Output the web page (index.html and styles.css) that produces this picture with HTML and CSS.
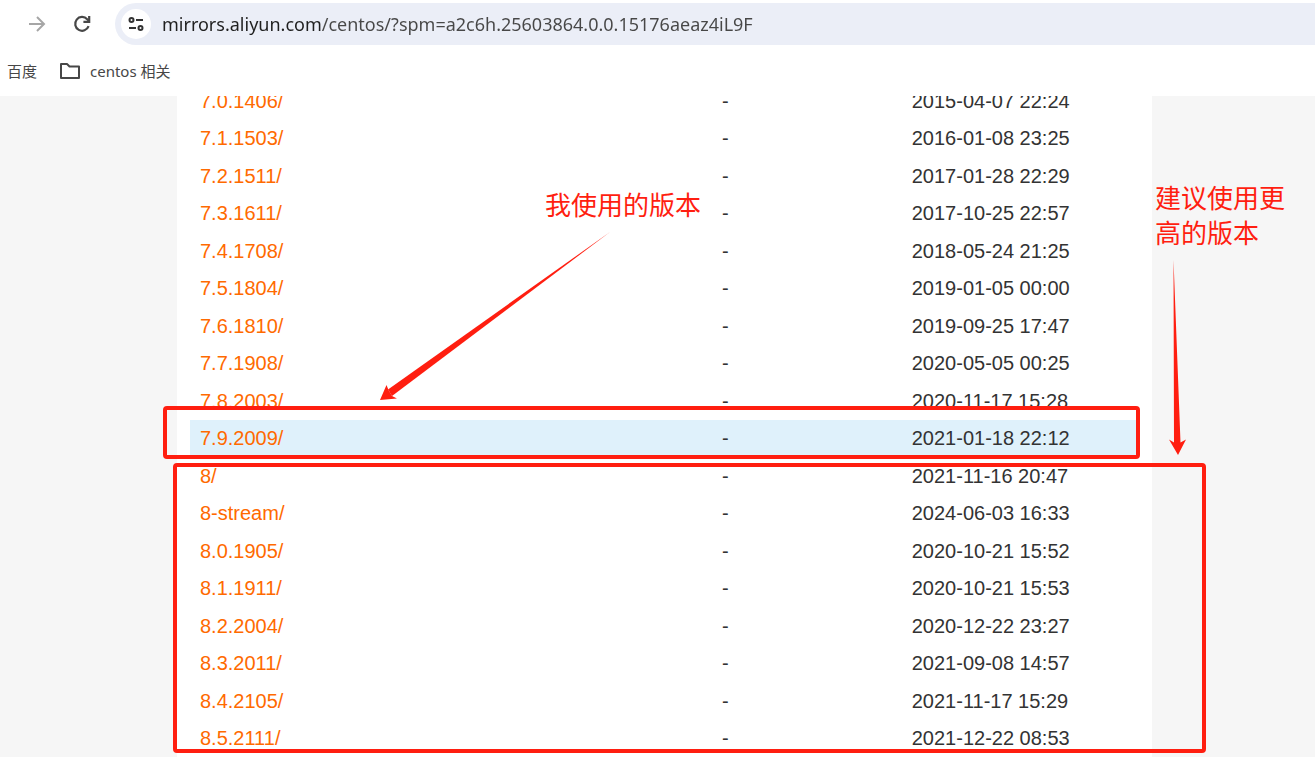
FILE: index.html
```html
<!DOCTYPE html>
<html lang="zh-CN">
<head>
    <meta charset="UTF-8">
    <meta name="viewport" content="width=device-width, initial-scale=1.0">
    <title>centos 镜像</title>
    <link rel="stylesheet" href="styles.css">
</head>
<body>

    <header class="browser">
        <div class="toolbar">
            <button class="nav-btn" type="button" aria-label="前进">
                <svg width="20" height="20" viewBox="0 0 20 20" fill="none" stroke="#a6a6a6" stroke-width="2">
                    <path d="M2 10H16.500M10 3L17 10L10 17"/>
                </svg>
            </button>
            <button class="nav-btn" type="button" aria-label="刷新">
                <svg width="20" height="20" viewBox="0 0 20 20" fill="none" stroke="#474747" stroke-width="2.200">
                    <path d="M16.600 12.200A6.900 6.900 0 1 1 15.200 5.200L17 7"/>
                    <path d="M17.200 2V7.800H11.400"/>
                </svg>
            </button>
            <div class="address-bar">
                <button class="site-info" type="button" aria-label="网站信息">
                    <svg width="18" height="18" viewBox="0 0 18 18" fill="none" stroke="#333" stroke-width="2">
                        <circle cx="4.500" cy="5" r="2"/>
                        <path d="M9 5H16M2 13H9"/>
                        <circle cx="13.500" cy="13" r="2"/>
                    </svg>
                </button>
                <input class="url" type="text" aria-label="地址" spellcheck="false" value="mirrors.aliyun.com/centos/?spm=a2c6h.25603864.0.0.15176aeaz4iL9F">
            </div>
        </div>
        <nav class="bookmarks">
            <a href="#">百度</a>
            <a href="#">
                <svg width="22" height="18" viewBox="0 0 22 18" fill="none" stroke="#474747" stroke-width="2" stroke-linejoin="round">
                    <path d="M2 2H8L10.500 4.500H20V16H2Z"/>
                </svg>
                <span>centos 相关</span>
            </a>
        </nav>
    </header>

    <main class="page">
        <div class="panel">
            <table class="file-list">
                <colgroup>
                    <col class="col-name">
                    <col class="col-size">
                    <col class="col-date">
                </colgroup>
                <tbody>
                    <tr><td><a href="#">7.0.1406/</a></td><td>-</td><td>2015-04-07 22:24</td></tr>
                    <tr><td><a href="#">7.1.1503/</a></td><td>-</td><td>2016-01-08 23:25</td></tr>
                    <tr><td><a href="#">7.2.1511/</a></td><td>-</td><td>2017-01-28 22:29</td></tr>
                    <tr><td><a href="#">7.3.1611/</a></td><td>-</td><td>2017-10-25 22:57</td></tr>
                    <tr><td><a href="#">7.4.1708/</a></td><td>-</td><td>2018-05-24 21:25</td></tr>
                    <tr><td><a href="#">7.5.1804/</a></td><td>-</td><td>2019-01-05 00:00</td></tr>
                    <tr><td><a href="#">7.6.1810/</a></td><td>-</td><td>2019-09-25 17:47</td></tr>
                    <tr><td><a href="#">7.7.1908/</a></td><td>-</td><td>2020-05-05 00:25</td></tr>
                    <tr><td><a href="#">7.8.2003/</a></td><td>-</td><td>2020-11-17 15:28</td></tr>
                    <tr class="active"><td><a href="#">7.9.2009/</a></td><td>-</td><td>2021-01-18 22:12</td></tr>
                    <tr><td><a href="#">8/</a></td><td>-</td><td>2021-11-16 20:47</td></tr>
                    <tr><td><a href="#">8-stream/</a></td><td>-</td><td>2024-06-03 16:33</td></tr>
                    <tr><td><a href="#">8.0.1905/</a></td><td>-</td><td>2020-10-21 15:52</td></tr>
                    <tr><td><a href="#">8.1.1911/</a></td><td>-</td><td>2020-10-21 15:53</td></tr>
                    <tr><td><a href="#">8.2.2004/</a></td><td>-</td><td>2020-12-22 23:27</td></tr>
                    <tr><td><a href="#">8.3.2011/</a></td><td>-</td><td>2021-09-08 14:57</td></tr>
                    <tr><td><a href="#">8.4.2105/</a></td><td>-</td><td>2021-11-17 15:29</td></tr>
                    <tr><td><a href="#">8.5.2111/</a></td><td>-</td><td>2021-12-22 08:53</td></tr>
                </tbody>
            </table>
        </div>

        <!-- red notes drawn over the list -->
        <div class="mark mark-current"></div>
        <div class="mark mark-newer"></div>
        <p class="note note-current">我使用的版本</p>
        <p class="note note-newer">建议使用更<br>高的版本</p>
        <svg class="arrow arrow-current" width="230" height="168" viewBox="0 0 230 168" fill="#ff1e10">
            <path d="M230 0L8 157.500L12 164Z"/>
            <path d="M0 168L6.500 153L8.500 158L12 164L17 166.500Z"/>
        </svg>
        <svg class="arrow arrow-newer" width="18" height="196" viewBox="0 0 18 196" fill="#ff1e10">
            <path d="M4.500 0L11.500 182.500L17 179.500L9 195L0 179.500L5 182.500Z"/>
        </svg>
    </main>

</body>
</html>
```
FILE: styles.css
```css
* {
    box-sizing: border-box;
}
body {
    margin: 0;
    height: 100vh;
    display: flex;
    flex-direction: column;
    overflow: hidden;
    font-family: "Liberation Sans", Arial, sans-serif;
    background-color: #fff;
}
button {
    padding: 0;
    border: none;
    background: none;
    cursor: pointer;
}
a {
    text-decoration: none;
}

/* browser bar */
.browser {
    flex: none;
    height: 96px;
    padding-top: 3px;
    font-family: "Noto Sans", "Noto Sans CJK SC", sans-serif;
}
.toolbar {
    display: flex;
    align-items: center;
    gap: 25px;
    padding-left: 27px;
}
.nav-btn {
    width: 20px;
    height: 20px;
}
.nav-btn svg, .site-info svg {
    display: block;
}
.address-bar {
    flex: 1;
    display: flex;
    align-items: center;
    gap: 11px;
    height: 42px;
    margin-left: -2px;
    padding-left: 6px;
    background-color: #ebeef7;
    border-radius: 21px 0 0 21px;
}
.site-info {
    display: flex;
    align-items: center;
    justify-content: center;
    width: 30px;
    height: 30px;
    border-radius: 50%;
    background-color: #fff;
}
.url {
    flex: 1;
    min-width: 0;
    padding: 0;
    border: none;
    outline: none;
    font-family: inherit;
    font-size: 18px;
    /* host is darker than the rest of the address */
    background: linear-gradient(to right, #1f1f1f 160px, #474747 160px);
    -webkit-background-clip: text;
    background-clip: text;
    color: transparent;
}
.bookmarks {
    display: flex;
    align-items: center;
    gap: 22px;
    height: 51px;
    padding-left: 7px;
}
.bookmarks a {
    display: flex;
    align-items: center;
    gap: 9px;
    font-size: 15px;
    color: #474747;
}

/* page */
.page {
    flex: 1;
    min-height: 0;
    position: relative;
    overflow: hidden;
    background-color: #f6f6f6;
}
.panel {
    margin: 0 163px 0 177px;
    padding: 0 13px;
    min-height: 100%;
    background-color: #fff;
    overflow: hidden;
}
.file-list {
    width: 100%;
    margin-top: -13px;
    table-layout: fixed;
    border-collapse: collapse;
    font-size: 20px;
    line-height: 24px;
    color: #333;
}
.col-name {
    width: 55%;
}
.col-size {
    width: 20%;
}
.file-list tr {
    height: 37px;
}
.file-list tr:nth-child(even) {
    height: 38px;
}
.file-list td {
    padding: 0 10px 2px;
    white-space: nowrap;
}
.file-list a {
    color: #ff6a00;
}
.active {
    background-color: #dff1fb;
}

/* notes */
.mark {
    position: absolute;
    border: 4px solid #ff1e10;
    border-radius: 4px;
}
.mark-current {
    top: 310px;
    left: 163px;
    right: 175px;
    height: 53px;
}
.mark-newer {
    top: 367px;
    left: 173px;
    right: 109px;
    height: 290px;
}
.note {
    position: absolute;
    margin: 0;
    font-family: "Noto Sans CJK SC", sans-serif;
    font-size: 26px;
    line-height: 35px;
    color: #ff1e10;
    white-space: nowrap;
}
.note-current {
    top: 90px;
    left: 545px;
}
.note-newer {
    top: 83px;
    left: 1155px;
}
.arrow {
    position: absolute;
}
.arrow-current {
    top: 136px;
    left: 380px;
}
.arrow-newer {
    top: 164px;
    left: 1169px;
}
```
